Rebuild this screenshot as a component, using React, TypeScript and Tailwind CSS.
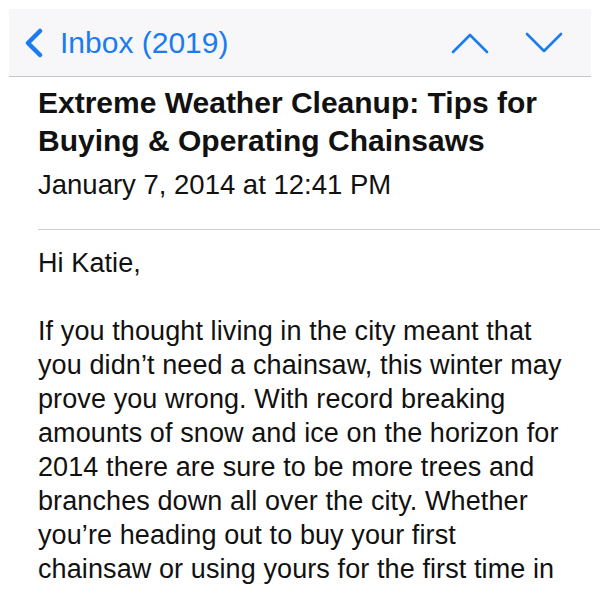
const bodyLines = [
  'If you thought living in the city meant that',
  'you didn’t need a chainsaw, this winter may',
  'prove you wrong. With record breaking',
  'amounts of snow and ice on the horizon for',
  '2014 there are sure to be more trees and',
  'branches down all over the city. Whether',
  'you’re heading out to buy your first',
  'chainsaw or using yours for the first time in',
]

const MailView = () => {
  return (
    <div className="h-[600px] w-[600px] overflow-hidden bg-white font-['Liberation_Sans',Arial,sans-serif] text-[#111]">
      <div className="px-[9px] pt-[9px]">
        <header className="flex h-[68px] items-center justify-between border-b border-[#c4c4c8] bg-[#f7f7f9] pl-[15px] pr-[28px]">
          <button className="flex items-center gap-[16px] text-[#1a7cf0]">
            <svg width="20" height="30" viewBox="0 0 20 30" fill="none">
              <path d="M16 3 L4 15 L16 27" stroke="currentColor" strokeWidth="4.5" strokeLinecap="round" strokeLinejoin="round" />
            </svg>
            <span className="text-[30px] leading-none">Inbox (2019)</span>
          </button>
          <div className="flex items-center gap-[36px] text-[#1a7cf0]">
            <svg width="38" height="22" viewBox="0 0 38 22" fill="none">
              <path d="M2 20 L19 3 L36 20" stroke="currentColor" strokeWidth="2.6" strokeLinecap="round" strokeLinejoin="round" />
            </svg>
            <svg width="38" height="22" viewBox="0 0 38 22" fill="none">
              <path d="M2 2 L19 19 L36 2" stroke="currentColor" strokeWidth="2.6" strokeLinecap="round" strokeLinejoin="round" />
            </svg>
          </div>
        </header>
      </div>

      <section className="pl-[38px] pt-[7px]">
        <h1 className="text-[30px] font-bold leading-[38px]">
          <span className="block whitespace-nowrap">Extreme Weather Cleanup: Tips for</span>
          <span className="block whitespace-nowrap">Buying &amp; Operating Chainsaws</span>
        </h1>
        <p className="mt-[8px] text-[27.5px] leading-[34px]">January 7, 2014 at 12:41 PM</p>

        <div className="mt-[27px] h-px bg-[#d0d0d4]" />

        <div className="pt-[16px] text-[27px] leading-[34px] tracking-[0.1px]">
          <p>Hi Katie,</p>
          <p className="mt-[34px]">
            {bodyLines.map((line) => (
              <span key={line} className="block whitespace-nowrap">
                {line}
              </span>
            ))}
          </p>
        </div>
      </section>
    </div>
  )
}

export default MailView
